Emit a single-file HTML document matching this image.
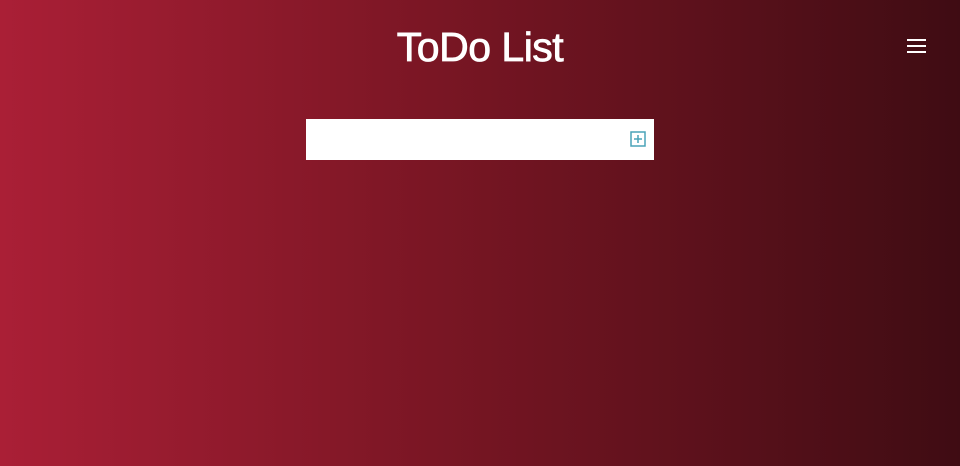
<!DOCTYPE html>
<html><head><style>
html,body{margin:0;padding:0;width:960px;height:466px;overflow:hidden}
body{background:linear-gradient(to right,#aa1f36,#7a1624 45%,#3f0c13);font-family:"Liberation Sans",sans-serif;position:relative}
h1{position:absolute;top:22px;left:0;width:960px;margin:0;text-align:center;color:#fff;font-weight:normal;font-size:41px;line-height:50px;letter-spacing:-0.5px;-webkit-text-stroke:0.8px #fff}
.ham{position:absolute;left:907px;width:19px;height:2px;background:#fff}
.box{position:absolute;left:306px;top:119px;width:348px;height:41px;background:#fff}
</style></head><body>
<h1>ToDo List</h1>
<div class="ham" style="top:39px"></div>
<div class="ham" style="top:45px"></div>
<div class="ham" style="top:51px"></div>
<div class="box">
<svg style="position:absolute;left:324px;top:12px" width="16" height="16" viewBox="0 0 16 16"><rect x="1" y="1" width="14" height="14" fill="none" stroke="#4aa3b8" stroke-width="1.5"/><path d="M8 4v8M4 8h8" stroke="#4aa3b8" stroke-width="1.5"/></svg>
</div>
</body></html>
